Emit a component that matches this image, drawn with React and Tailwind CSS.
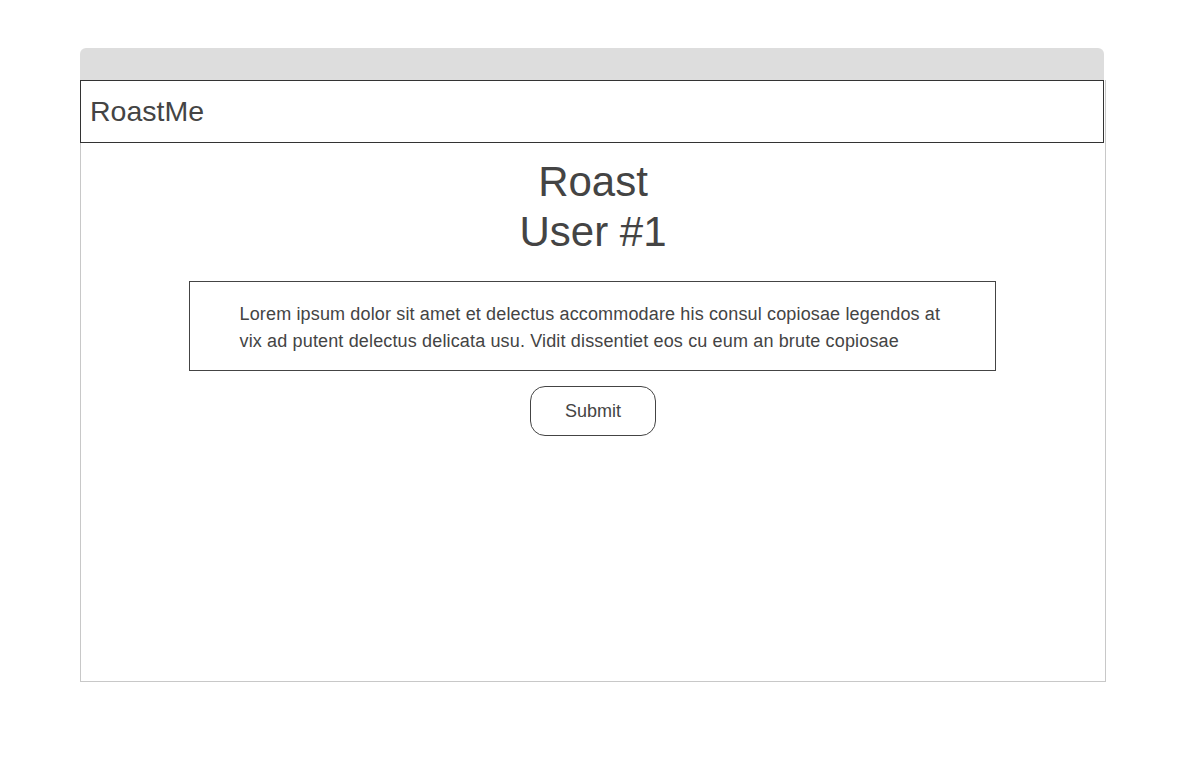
import React from "react";

export default function App() {
  return (
    <div className="min-h-[760px] bg-white pt-[48px] font-['Liberation_Sans',Arial,sans-serif] text-[#444]">
      <div className="ml-[80px] w-[1026px]">
        {/* window chrome */}
        <div className="h-[32px] w-[1024px] rounded-t-[6px] bg-[#dddddd]" />
        <div className="flex h-[602px] flex-col border-x border-b border-[#c8c8c8]">
          <header className="-ml-px flex h-[63px] w-[1024px] items-center border border-[#333] pl-[9px]">
            <span className="text-[28.5px] leading-none">RoastMe</span>
          </header>
          <main className="flex flex-col items-center">
            <h1 className="mt-[14px] text-center text-[42px] leading-[50px]">
              Roast
              <br />
              User #1
            </h1>
            <div className="mt-[24px] mr-[2px] w-[807px] border border-[#444] px-[50px] pt-[19px] pb-[15px] text-[18px] leading-[27px] tracking-[0.15px]">
              Lorem ipsum dolor sit amet et delectus accommodare his consul copiosae legendos at vix ad putent delectus delicata usu. Vidit dissentiet eos cu eum an brute copiosae
            </div>
            <button className="mt-[15px] h-[50px] w-[126px] rounded-[15px] border border-[#444] bg-white text-[18px] text-[#444]">
              Submit
            </button>
          </main>
        </div>
      </div>
    </div>
  );
}
